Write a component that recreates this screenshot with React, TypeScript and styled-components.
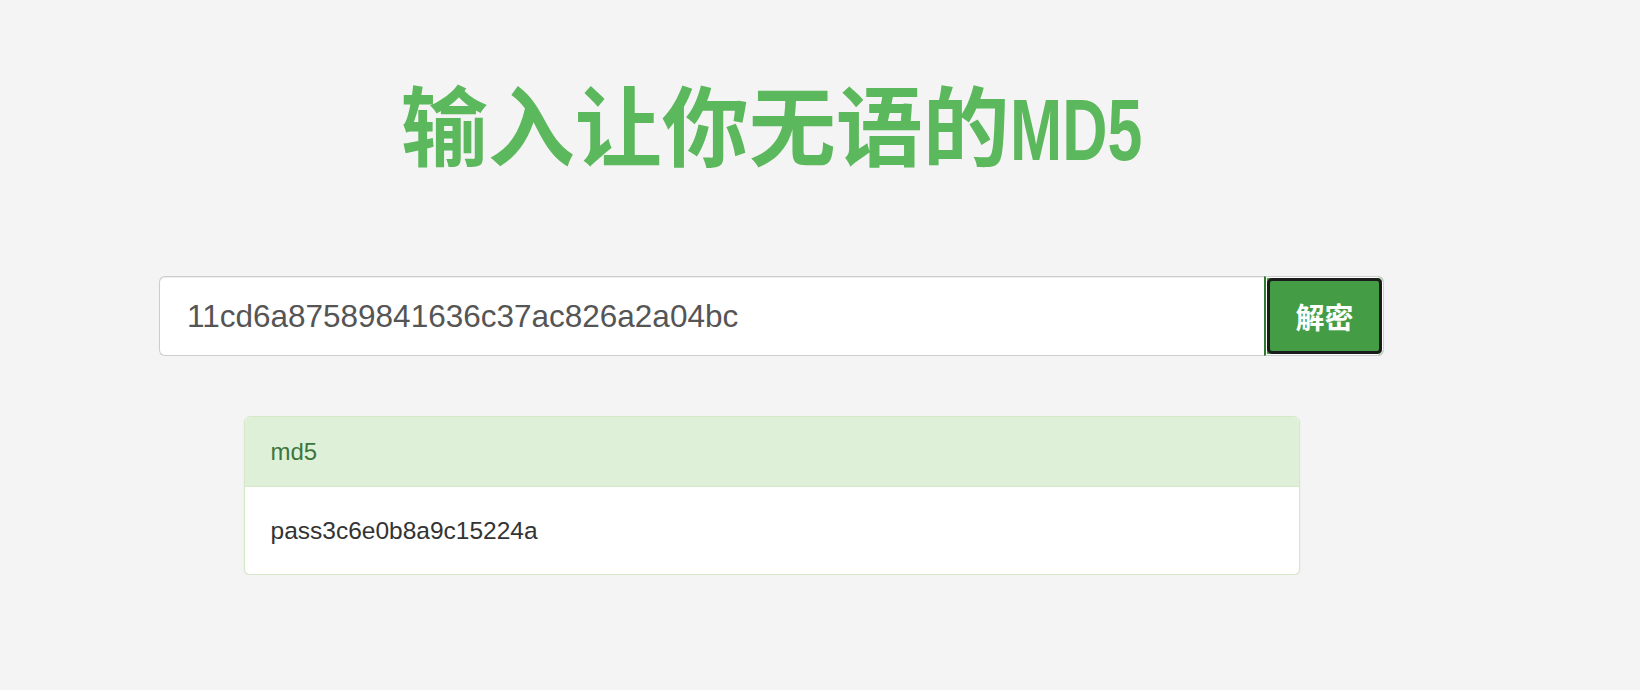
import * as React from 'react';
import styled, { createGlobalStyle } from 'styled-components';

const GlobalStyle = createGlobalStyle`
	html, body {
		margin: 0;
		padding: 0;
		background: #f4f4f4;
	}
	body {
		font-family: "Liberation Sans", Arial, sans-serif;
		color: #333;
	}
`;

const Page = styled.div`
	padding: 79px 0 0 159px;
`;

const Column = styled.div`
	width: 1225px;
`;

const Title = styled.h1`
	margin: 0;
	text-align: center;
	font-family: "Noto Sans CJK SC", sans-serif;
	font-size: 87px;
	font-weight: 700;
	line-height: 1;
	color: #5cb85c;
	white-space: nowrap;
`;

const Latin = styled.span`
	display: inline-block;
	font-family: "Liberation Sans", Arial, sans-serif;
	font-size: 87px;
	font-weight: 700;
	transform: scaleX(0.72);
	transform-origin: left center;
	margin-right: -51px;
`;

const InputGroup = styled.div`
	display: flex;
	height: 80px;
	margin-top: 103px;
`;

const HashInput = styled.input`
	flex: 1;
	min-width: 0;
	box-sizing: border-box;
	height: 100%;
	margin: 0;
	padding: 0 27px;
	border: 1px solid #ccc;
	border-right: none;
	border-radius: 6px 0 0 6px;
	background: #fff;
	box-shadow: inset 0 1px 1px rgba(0, 0, 0, 0.075);
	font-family: "Liberation Sans", Arial, sans-serif;
	font-size: 31.5px;
	color: #555;
	outline: none;
`;

const DecryptButton = styled.button`
	position: relative;
	box-sizing: border-box;
	width: 120px;
	height: 100%;
	margin: 0;
	padding: 0;
	border: 1px solid #cfcfcf;
	border-left: 2px solid #2f7a2f;
	border-radius: 0 6px 6px 0;
	background: #449d44;
	box-shadow: inset 0 0 0 1px #fff;
	color: #fff;
	font-family: "Noto Sans CJK SC", sans-serif;
	font-size: 29px;
	font-weight: 700;
	cursor: pointer;

	&::after {
		content: '';
		position: absolute;
		top: 1px;
		right: 1px;
		bottom: 1px;
		left: 1px;
		border: 3px solid #1c1c1c;
		border-radius: 5px;
	}
`;

const Panel = styled.div`
	width: 1054px;
	margin: 60px auto 0;
	background: #fff;
	border: 1px solid #d6e9c6;
	border-radius: 6px;
	box-shadow: 0 1px 2px rgba(0, 0, 0, 0.07);
	overflow: hidden;
`;

const PanelHeading = styled.div`
	display: flex;
	align-items: center;
	height: 69px;
	padding: 0 26px;
	background: #dff0d8;
	border-bottom: 1px solid #d6e9c6;
	color: #3c763d;
	font-size: 24px;
`;

const PanelBody = styled.div`
	display: flex;
	align-items: center;
	height: 87px;
	padding: 0 26px;
	color: #333;
	font-size: 24.5px;
`;

export default function App() {
	const [hash, setHash] = React.useState('11cd6a87589841636c37ac826a2a04bc');

	return (
		<Page>
			<GlobalStyle />
			<Column>
				<Title>
					输入让你无语的<Latin>MD5</Latin>
				</Title>
				<InputGroup>
					<HashInput
						type="text"
						value={hash}
						onChange={(e) => setHash(e.target.value)}
					/>
					<DecryptButton type="button">解密</DecryptButton>
				</InputGroup>
				<Panel>
					<PanelHeading>md5</PanelHeading>
					<PanelBody>pass3c6e0b8a9c15224a</PanelBody>
				</Panel>
			</Column>
		</Page>
	);
}
